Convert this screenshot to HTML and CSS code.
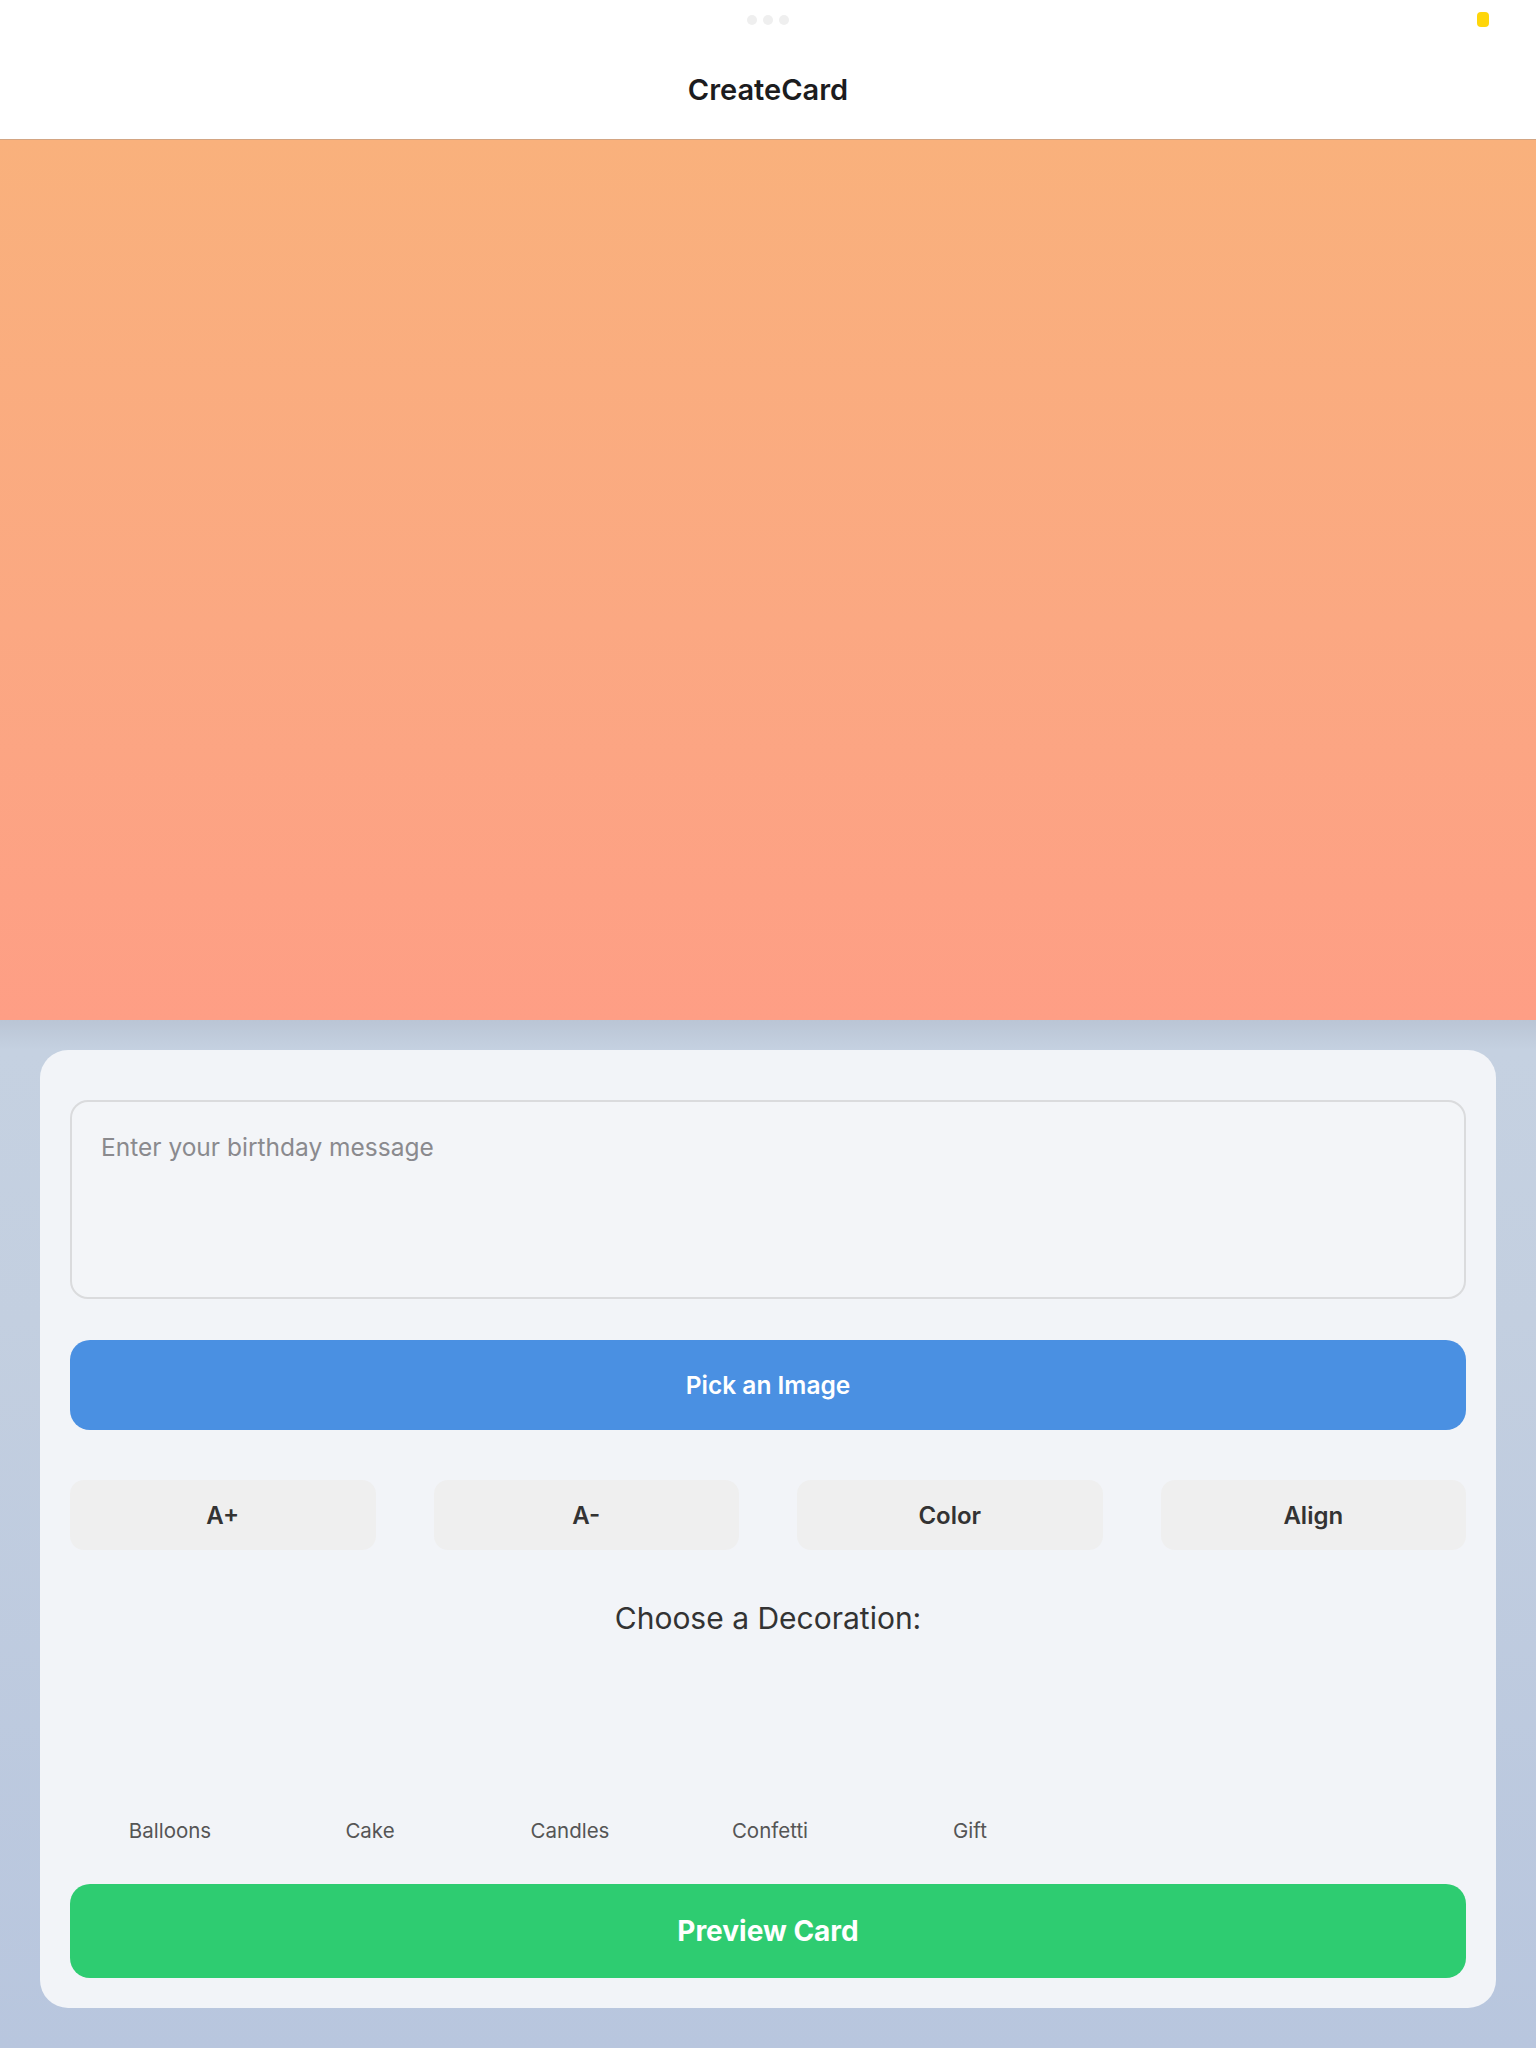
FILE: index.html
```html
<!DOCTYPE html>
<html lang="en">
<head>
<meta charset="utf-8">
<title>CreateCard</title>
<link rel="stylesheet" href="styles.css">
</head>
<body>
<div class="app">
  <header class="topbar">
    <div class="grabber"><span></span><span></span><span></span></div>
    <div class="indicator"></div>
    <h1 class="title">CreateCard</h1>
  </header>
  <section class="hero"></section>
  <main class="editor">
    <div class="card">
      <textarea class="message" placeholder="Enter your birthday message"></textarea>
      <button class="btn btn-blue">Pick an Image</button>
      <div class="tools">
        <button class="tool">A+</button>
        <button class="tool">A-</button>
        <button class="tool">Color</button>
        <button class="tool">Align</button>
      </div>
      <h2 class="deco-title">Choose a Decoration:</h2>
      <div class="deco-row">
        <div class="deco"><div class="deco-img"></div><span class="deco-label">Balloons</span></div>
        <div class="deco"><div class="deco-img"></div><span class="deco-label">Cake</span></div>
        <div class="deco"><div class="deco-img"></div><span class="deco-label">Candles</span></div>
        <div class="deco"><div class="deco-img"></div><span class="deco-label">Confetti</span></div>
        <div class="deco"><div class="deco-img"></div><span class="deco-label">Gift</span></div>
      </div>
      <button class="btn btn-green">Preview Card</button>
    </div>
  </main>
</div>
</body>
</html>
```
FILE: styles.css
```css
* { box-sizing: border-box; }
html, body { margin: 0; padding: 0; }
body {
  font-family: Inter, "Noto Sans", sans-serif;
  background: #b8c6de;
  color: #222;
}
.app { width: 1536px; min-height: 2048px; display: flex; flex-direction: column; }

.topbar {
  position: relative;
  height: 140px;
  background: #ffffff;
  border-bottom: 1px solid #d3a583;
  padding-top: 72px;
  text-align: center;
}
.grabber {
  position: absolute;
  top: 15px;
  left: 747px;
  display: flex;
  gap: 6px;
}
.grabber span {
  width: 10px;
  height: 10px;
  border-radius: 50%;
  background: #efefef;
}
.indicator {
  position: absolute;
  top: 12px;
  left: 1477px;
  width: 12px;
  height: 15px;
  border-radius: 4px;
  background: #ffd60a;
}
.title {
  margin: 0;
  font-size: 29px;
  line-height: 36px;
  font-weight: 600;
  color: #1c1c1e;
}

.hero {
  height: 880px;
  background: linear-gradient(to bottom, #f9b17c 0%, #fba882 55%, #fe9e85 100%);
}

.editor {
  flex: 1;
  padding: 30px 40px 40px;
  background: linear-gradient(to bottom, #bac5d5 0px, #c5d1e1 30px, #c3cfe0 300px, #b8c6de 100%);
}
.card {
  background: #f2f4f8;
  border-radius: 28px;
  padding: 50px 30px 30px;
  display: flex;
  flex-direction: column;
}
.message {
  display: block;
  width: 100%;
  height: 199px;
  resize: none;
  border: 2px solid #dadbdd;
  border-radius: 18px;
  background: #f3f5f8;
  padding: 30px 29px;
  font-family: Inter, "Noto Sans", sans-serif;
  font-size: 24.5px;
  line-height: 30px;
  color: #222;
  outline: none;
}
.message::placeholder { color: #8a8a8e; }

.btn {
  display: block;
  width: 100%;
  border: none;
  color: #ffffff;
  font-family: Inter, "Noto Sans", sans-serif;
}
.btn-blue {
  margin-top: 41px;
  height: 90px;
  border-radius: 20px;
  background: #4a90e2;
  font-size: 24.5px;
  font-weight: 600;
}
.tools {
  margin-top: 50px;
  display: grid;
  grid-template-columns: repeat(4, 1fr);
  column-gap: 58px;
}
.tool {
  height: 70px;
  border: none;
  border-radius: 14px;
  background: #efefef;
  font-family: Inter, "Noto Sans", sans-serif;
  font-size: 24px;
  font-weight: 600;
  color: #333333;
}
.deco-title {
  margin: 50px 0 0;
  text-align: center;
  font-size: 30px;
  line-height: 36px;
  font-weight: 400;
  color: #333333;
}
.deco-row {
  margin-top: 20px;
  display: flex;
}
.deco {
  width: 200px;
  display: flex;
  flex-direction: column;
  align-items: center;
}
.deco-img { height: 160px; }
.deco-label {
  margin-top: 3px;
  font-size: 20.5px;
  line-height: 24px;
  color: #555555;
}
.btn-green {
  margin-top: 41px;
  height: 94px;
  border-radius: 20px;
  background: #2ecc71;
  font-size: 28px;
  font-weight: 700;
}
```
